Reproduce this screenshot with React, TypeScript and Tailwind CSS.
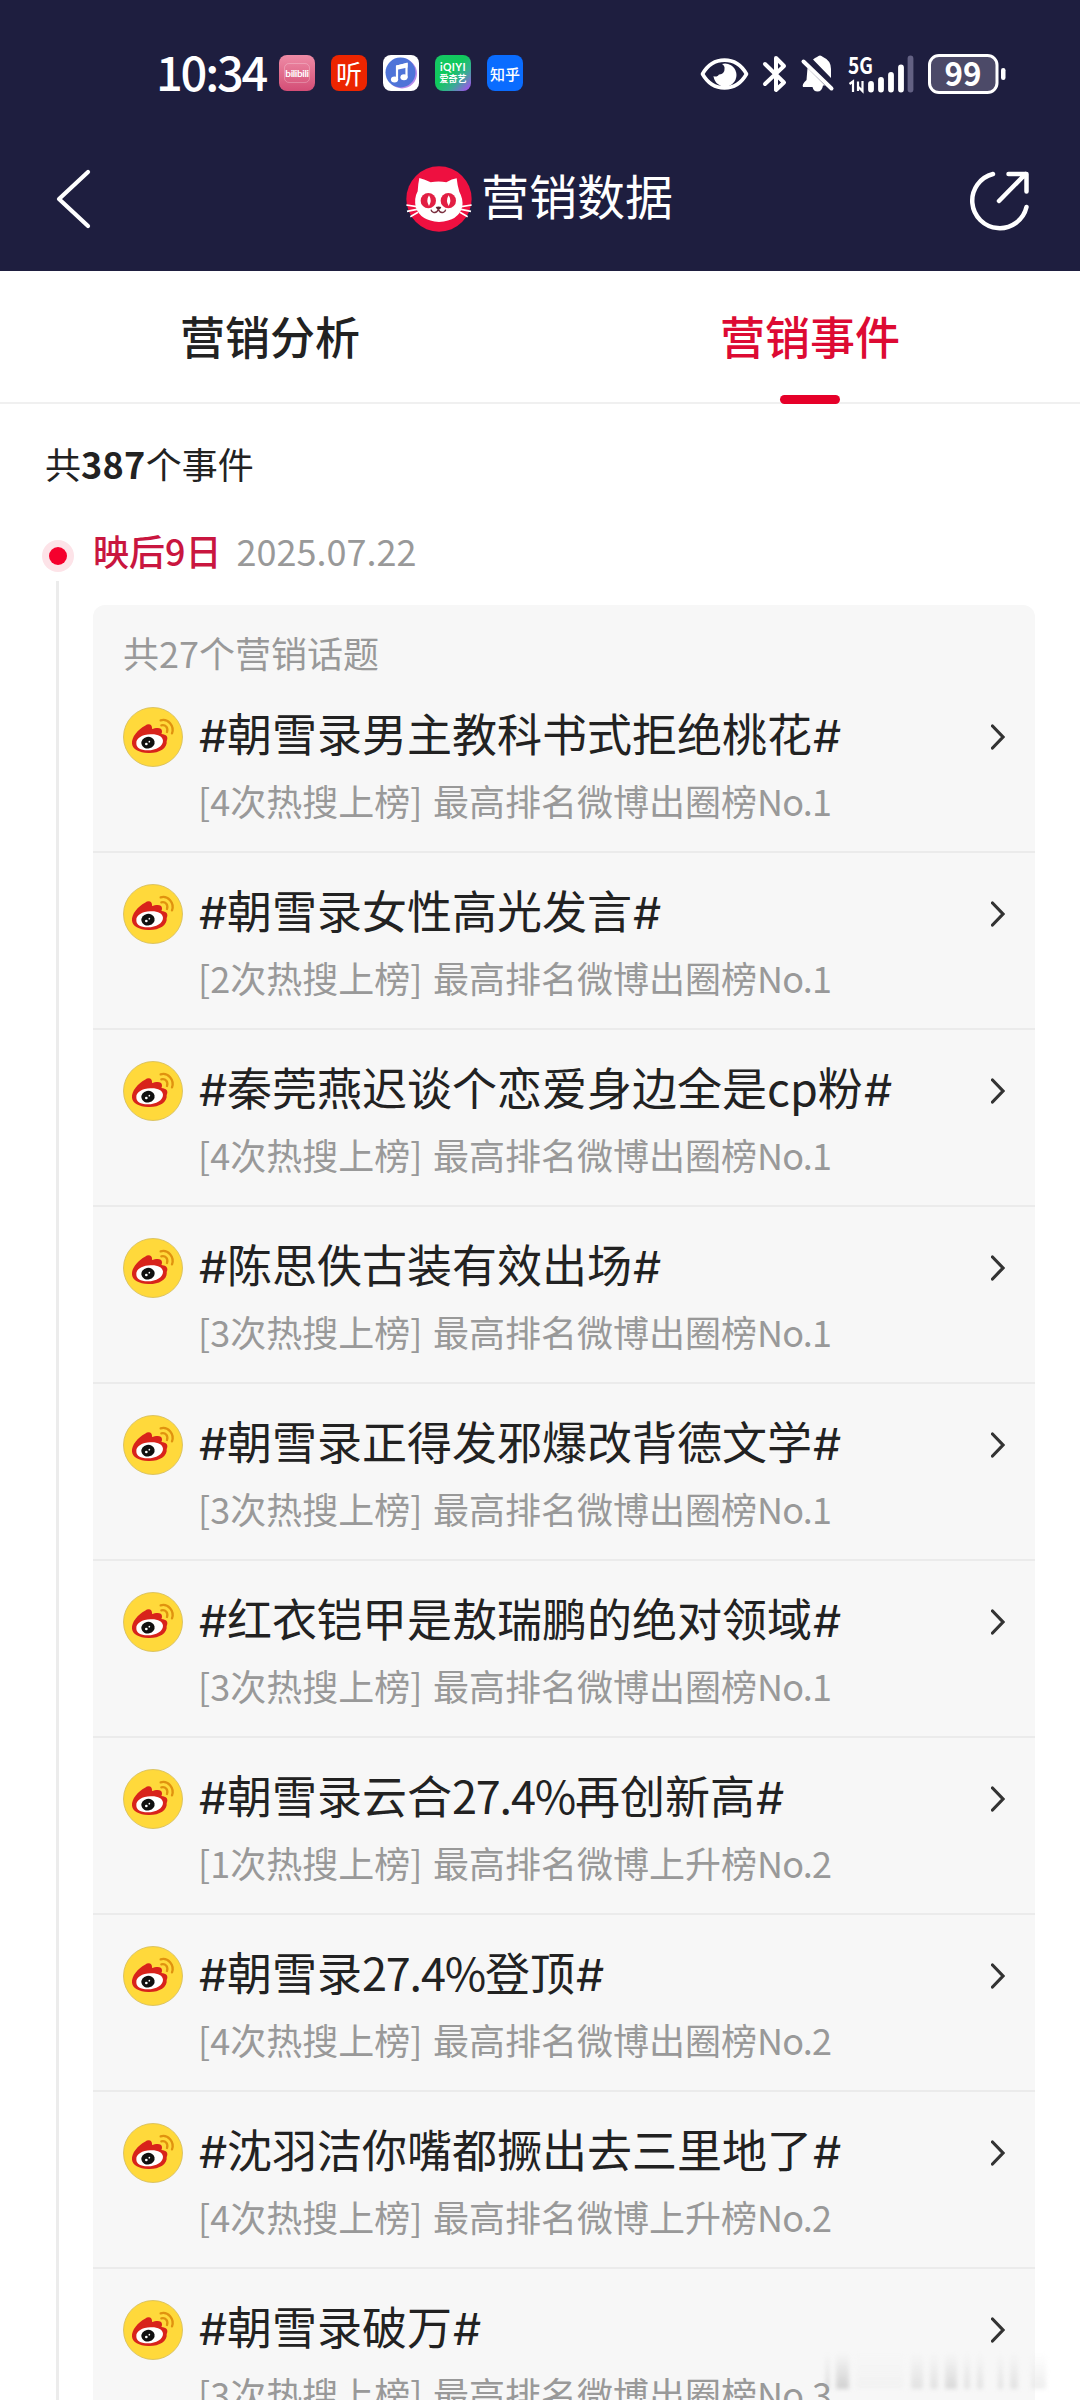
interface Topic {
  title: string
  times: number
  board: string
  rank: number
}

const topics: Topic[] = [
  { title: '朝雪录男主教科书式拒绝桃花', times: 4, board: '出圈榜', rank: 1 },
  { title: '朝雪录女性高光发言', times: 2, board: '出圈榜', rank: 1 },
  { title: '秦莞燕迟谈个恋爱身边全是cp粉', times: 4, board: '出圈榜', rank: 1 },
  { title: '陈思佚古装有效出场', times: 3, board: '出圈榜', rank: 1 },
  { title: '朝雪录正得发邪爆改背德文学', times: 3, board: '出圈榜', rank: 1 },
  { title: '红衣铠甲是敖瑞鹏的绝对领域', times: 3, board: '出圈榜', rank: 1 },
  { title: '朝雪录云合27.4%再创新高', times: 1, board: '上升榜', rank: 2 },
  { title: '朝雪录27.4%登顶', times: 4, board: '出圈榜', rank: 2 },
  { title: '沈羽洁你嘴都撅出去三里地了', times: 4, board: '上升榜', rank: 2 },
  { title: '朝雪录破万', times: 3, board: '出圈榜', rank: 3 },
]

function AppIcons() {
  return (
    <div className="flex gap-4">
      <div className="flex h-9 w-9 items-center justify-center rounded-lg bg-linear-to-b from-[#ee8ba6] to-[#d34d76]">
        <span className="rounded-[5px] border border-white/25 font-['Lato'] text-[10px] leading-[18px] font-bold tracking-[-0.4px] text-white">bilibili</span>
      </div>
      <div className="flex h-9 w-9 items-center justify-center rounded-lg bg-[#ec2500] text-[26px] leading-none text-white">听</div>
      <div className="h-9 w-9 rounded-lg bg-white">
        <svg viewBox="0 0 36 36" className="h-9 w-9">
          <circle cx="19" cy="18.5" r="15" fill="#b98be8" />
          <circle cx="17.5" cy="17.5" r="15" fill="#4f74d8" />
          <path d="M14 25V11.5L23.500 9v13.500" fill="none" stroke="#fff" strokeWidth="2.2" />
          <path d="M13 10.500 24.600 8v4.500L13 15z" fill="#fff" />
          <ellipse cx="11.500" cy="24.500" rx="3.600" ry="3" fill="#fff" />
          <ellipse cx="21" cy="22.300" rx="3.600" ry="3" fill="#fff" />
        </svg>
      </div>
      <div className="flex h-9 w-9 flex-col items-center justify-center rounded-lg bg-[linear-gradient(135deg,#16c765_0%,#10c95c_45%,#38ac94_68%,#a450f0_95%)] text-white">
        <span className="font-['Lato'] text-[10.5px] leading-[11px] font-bold tracking-[0.4px]">iQIYI</span>
        <span className="text-[9px] leading-[11px] font-bold">爱奇艺</span>
      </div>
      <div className="flex h-9 w-9 items-center justify-center rounded-lg bg-[#0a6cff] text-[15px] leading-none font-medium text-white">知乎</div>
    </div>
  )
}

function StatusIcons() {
  return (
    <svg width="310" height="44" viewBox="698 50 310 44" fill="none">
      {/* eye */}
      <path d="M702.500 73C713 54.500 736 54.500 746.500 73C736 91.500 713 91.500 702.500 73Z" stroke="#fff" strokeWidth="3.600" strokeLinejoin="round" />
      <path d="M722 63A11.500 11.500 0 1 1 713.500 75A4 4 0 0 0 719 73.500A5 5 0 0 0 724.500 68Q725 65 722 63Z" fill="#fff" />
      {/* bluetooth */}
      <path d="M765 63 784 81.500 776 89V57L784 65 765 83" stroke="#fff" strokeWidth="4" strokeLinecap="round" strokeLinejoin="round" />
      {/* muted bell */}
      <path d="M813 58.500Q815 56.500 817 56Q820 53 823 56Q831 59.500 831 68V77Z" fill="#fff" />
      <path d="M807.500 67 825 84.500H823Q822 90.500 817.500 90.500Q813.500 90.500 812.500 86H803Q801.500 83.500 806.500 79Z" fill="#fff" />
      <path d="M803.500 60.500 831.500 87.500" stroke="#fff" strokeWidth="4" strokeLinecap="round" />
      {/* signal */}
      <text x="848" y="73" fill="#fff" fontSize="23" fontWeight="700" textLength="25" lengthAdjust="spacingAndGlyphs">5G</text>
      <path d="M849.500 83 853 80.500V91M858 80.500V90M862.500 80V90L857.500 85" stroke="#fff" strokeWidth="2.200" />
      <path d="M871 83V88.500M881 79V88.500M891 74V88.500M901 66.500V88.500" stroke="#fff" strokeWidth="5.800" strokeLinecap="round" />
      <path d="M910.500 57.500V88.500" stroke="#636183" strokeWidth="5.800" strokeLinecap="round" />
      {/* battery */}
      <rect x="929.500" y="54.500" width="67.500" height="37" rx="9.500" fill="#4c4a68" stroke="#fff" strokeWidth="3" />
      <rect x="1001" y="67" width="4.500" height="12" rx="2.200" fill="#fff" />
      <text x="944.500" y="84.500" fill="#fff" fontSize="33" fontWeight="700" textLength="37" lengthAdjust="spacingAndGlyphs">99</text>
    </svg>
  )
}

function CatLogo() {
  return (
    <svg viewBox="0 0 198 198" className="h-[66px] w-[66px]">
      <circle cx="99" cy="99" r="98" fill="#ee1040" />
      <path d="M40 36Q56 40 74 49Q98 44 121 49Q138 39 152 37Q154 58 160 77Q172 99 169 121Q159 165 99 168Q42 164 29 123Q24 96 35 76Q36 55 40 36Z" fill="#fff" />
      <path d="M1 117 32 122M3 136 33 130M13 152 36 139M197 117 166 122M195 136 165 130M185 152 162 139" stroke="#fff" strokeWidth="5" />
      <circle cx="67" cy="104" r="23" fill="#e21e43" />
      <circle cx="127" cy="104" r="23" fill="#e21e43" />
      <path d="M69 88Q79 104 69 120Q59 104 69 88ZM128 88Q138 104 128 120Q118 104 128 88Z" fill="#fff" />
      <path d="M89 123Q98 120 106 123Q104 131 97 131Q91 130 89 123Z" fill="#5b2430" />
      <path d="M97 130Q93 142 82 139Q76 137 75 131M97 130Q101 142 112 139Q118 137 119 131" fill="none" stroke="#7b3040" strokeWidth="4" />
    </svg>
  )
}

function WeiboIcon() {
  return (
    <svg viewBox="0 0 180 180" className="h-[60px] w-[60px] shrink-0">
      <circle cx="90" cy="90" r="88.500" fill="#ffd93b" stroke="#d5bd5c" strokeWidth="2.500" />
      <path d="M27 110C25 90 45 67 66 56C77 48 89 52 87 66C98 62 117 59 117 73Q117 79 115 81C130 82 137 90 131 102C134 124 108 139 76 138C47 136 29 127 27 110Z" fill="#d8231b" />
      <path d="M40 109C39 93 58 83 82 82C104 81 119 88 120 101C120 118 100 129 74 130C52 130 40 123 40 109Z" fill="#fff" />
      <ellipse cx="75" cy="107" rx="20" ry="17.500" fill="#111" transform="rotate(-12 75 107)" />
      <circle cx="70" cy="111" r="4" fill="#fff" />
      <circle cx="79" cy="104" r="2.500" fill="#fff" />
      <path d="M113 40C135 34 155 56 147 79" fill="none" stroke="#e0920f" strokeWidth="7" strokeLinecap="round" />
      <path d="M115 55C128 52 136 62 132 75" fill="none" stroke="#e0920f" strokeWidth="7" strokeLinecap="round" />
    </svg>
  )
}

function Hash() {
  return <span className="inline-block w-[29px] text-center font-['Inter'] text-[44px] tracking-normal italic">#</span>
}

function TopicRow({ topic, last }: { topic: Topic; last: boolean }) {
  // latin digits run a little wide next to the hanzi
  const parts = topic.title.split(/([\d.%]+)/)

  return (
    <li className={last ? 'h-[130px] px-[30px] pt-[31px]' : 'h-[177px] border-b-2 border-[#ebebeb] px-[30px] pt-[31px]'}>
      <div className="flex h-[60px] items-center">
        <WeiboIcon />
        <p className="-mt-[5px] ml-[15px] flex-1 text-[45px] leading-[60px] whitespace-nowrap text-[#222]">
          <Hash />
          {parts.map((part, i) => (
            <span key={i} className={i % 2 ? 'tracking-[-1.2px]' : ''}>{part}</span>
          ))}
          <Hash />
        </p>
        <svg width="14" height="26" viewBox="0 0 14 26" fill="none">
          <path d="M1.500 2 12 13 1.500 24" stroke="#333" strokeWidth="3.200" strokeLinecap="round" />
        </svg>
      </div>
      <p className="mt-[9px] ml-[75px] text-[36px] leading-[48px] [word-spacing:2.5px] whitespace-nowrap text-[#999]">
        [{topic.times}次热搜上榜] 最高排名微博{topic.board}
        <span className="tracking-[-0.8px]">No.{topic.rank}</span>
      </p>
    </li>
  )
}

export default function App() {
  return (
    <div className="relative flex h-[2400px] w-[1080px] flex-col overflow-hidden bg-white font-['Noto_Sans_CJK_SC',sans-serif] text-[#222]">
      <header className="h-[271px] shrink-0 bg-[#1e1e3f] text-white">
        <div className="flex h-[146px] items-center justify-between pr-[72px] pl-[156px]">
          <div className="flex items-center">
            <span className="-mt-[6px] w-[123px] text-[47px] leading-none font-medium tracking-[-2.2px]">10:34</span>
            <AppIcons />
          </div>
          <StatusIcons />
        </div>
        <div className="flex h-[106px] items-center justify-between pr-[49px] pl-[55px]">
          <svg width="50" height="62" viewBox="0 0 50 62" fill="none">
            <path d="M33 4 4 31 33 58" stroke="#fff" strokeWidth="4.200" strokeLinecap="round" strokeLinejoin="round" />
          </svg>
          <div className="flex items-center gap-[9px] pl-[7px]">
            <CatLogo />
            <h1 className="-mt-[11px] text-[48px] leading-none">营销数据</h1>
          </div>
          <svg width="64" height="64" viewBox="0 0 64 64" fill="none" className="mt-[2px]">
            <path d="M26 6A27.500 27.500 0 1 0 59.500 39M32 33 58.500 6M41.500 6H59.500V23.500" stroke="#fff" strokeWidth="4.500" strokeLinecap="round" strokeLinejoin="round" />
          </svg>
        </div>
      </header>

      <nav className="flex h-[133px] shrink-0 border-b-2 border-[#f0f0f0] text-[45px] leading-[66px] font-medium">
        <div className="flex flex-1 justify-center pt-[32px]">营销分析</div>
        <div className="flex flex-1 flex-col items-center justify-between pt-[32px] text-[#dd0a33]">
          营销事件
          <span className="-mb-[2px] h-[9px] w-[60px] shrink-0 rounded-full bg-[#e60029]" />
        </div>
      </nav>

      <main className="flex flex-1 flex-col pr-[45px] pl-[42px]">
        <p className="ml-[3px] pt-[33px] text-[36px] leading-[52px]">
          共<b className="font-bold tracking-[0.3px]">387</b>个事件
        </p>

        <div className="mt-[35px] flex h-[52px] items-center text-[36px] leading-[52px]">
          <span className="mt-[11px] flex h-8 w-8 items-center justify-center rounded-full bg-[#fde3e8]">
            <span className="h-[18px] w-[18px] rounded-full bg-[#f5002d]" />
          </span>
          <span className="ml-[19px] font-medium text-[#c9163f]">映后9日</span>
          <span className="ml-[15px] text-[#999]">2025.07.22</span>
        </div>

        <div className="flex flex-1">
          <div className="mt-[5px] mr-[34px] ml-[14px] w-[3px] shrink-0 bg-[#ececec]" />
          <section className="mt-[29px] w-[942px] shrink-0 rounded-t-[12px] bg-[#f7f7f7]">
            <h2 className="h-[71px] pt-[21px] pl-[30px] text-[36px] leading-[52px] text-[#999]">共27个营销话题</h2>
            <ul>
              {topics.map((topic, i) => (
                <TopicRow key={topic.title} topic={topic} last={i === topics.length - 1} />
              ))}
            </ul>
          </section>
        </div>
      </main>

      {/* faded mark in the bottom corner */}
      <div className="absolute right-[12px] bottom-[11px] flex h-[36px] w-[242px] items-stretch gap-[7px] opacity-50 blur-[2px]">
        <i className="w-[3px] bg-linear-to-b from-transparent to-[#aaa]" />
        <i className="w-[13px] bg-linear-to-b from-transparent to-[#aaa]" />
        <i className="w-[48px] bg-linear-to-b from-transparent to-[#eee]" />
        <i className="w-[12px] bg-linear-to-b from-transparent to-[#ccc]" />
        <i className="w-[8px] bg-linear-to-b from-transparent to-[#ccc]" />
        <i className="w-[12px] bg-linear-to-b from-transparent to-[#bbb]" />
        <i className="w-[6px] bg-linear-to-b from-transparent to-[#ccc]" />
        <i className="mr-[8px] w-[6px] bg-linear-to-b from-transparent to-[#ccc]" />
        <i className="w-[5px] bg-linear-to-b from-transparent to-[#ccc]" />
        <i className="mr-[6px] w-[8px] bg-linear-to-b from-transparent to-[#ccc]" />
        <i className="w-[15px] bg-linear-to-b from-transparent to-[#ddd]" />
      </div>
    </div>
  )
}
